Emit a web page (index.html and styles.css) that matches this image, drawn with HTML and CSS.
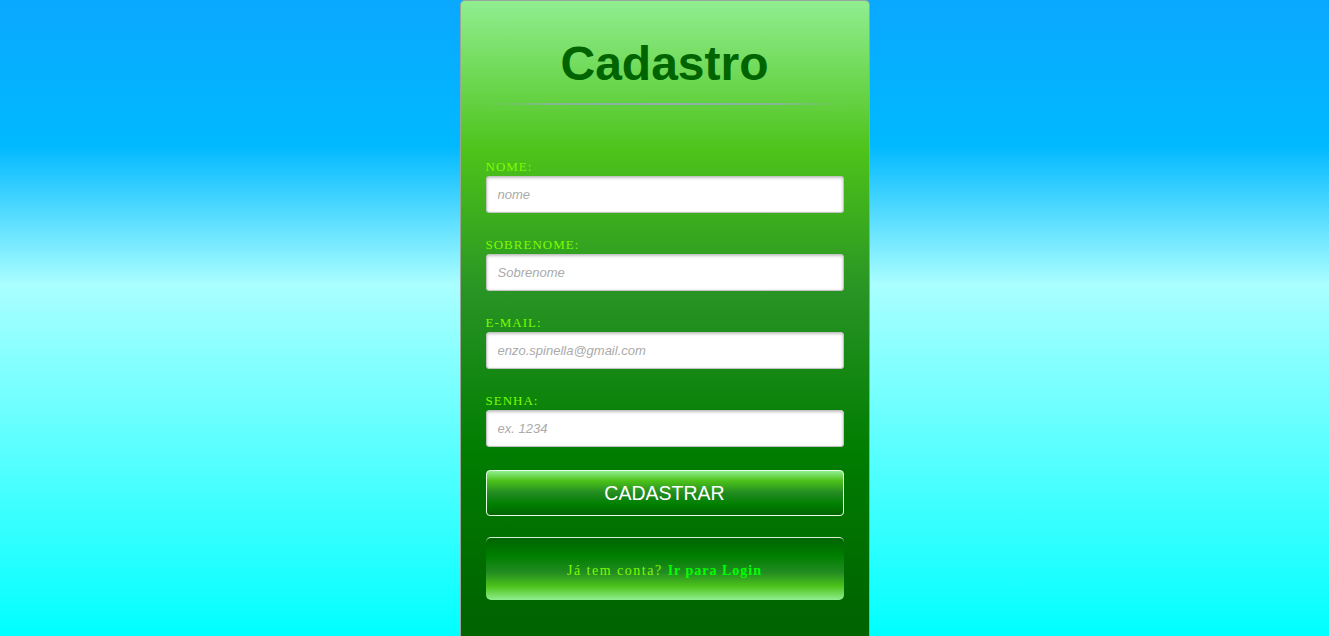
FILE: index.html
```html
<!DOCTYPE html>
<html lang="pt-BR">
<head>
<meta charset="utf-8">
<title>Cadastro</title>
<link rel="stylesheet" href="styles.css">
</head>
<body>
<main class="card">
  <h1 class="title">Cadastro</h1>
  <div class="divider"></div>
  <form class="form">
    <div class="field">
      <label class="label" for="nome">NOME:</label>
      <input class="input" id="nome" type="text" placeholder="nome">
    </div>
    <div class="field">
      <label class="label" for="sobrenome">SOBRENOME:</label>
      <input class="input" id="sobrenome" type="text" placeholder="Sobrenome">
    </div>
    <div class="field">
      <label class="label" for="email">E-MAIL:</label>
      <input class="input" id="email" type="email" placeholder="enzo.spinella@gmail.com">
    </div>
    <div class="field">
      <label class="label" for="senha">SENHA:</label>
      <input class="input" id="senha" type="password" placeholder="ex. 1234">
    </div>
    <button class="submit" type="button">CADASTRAR</button>
    <div class="login-box">
      <p class="login-text">Já tem conta? <a class="login-link" href="#">Ir para Login</a></p>
    </div>
  </form>
</main>
</body>
</html>
```

FILE: styles.css
```css
html, body {
  margin: 0;
  padding: 0;
  height: 100%;
  overflow: hidden;
}

html {
  background: linear-gradient(to bottom, #0aa8ff 0px, #00b9ff 145px, #aaffff 285px, #00ffff 636px);
}

body {
  font-family: "Liberation Sans", Arial, sans-serif;
}

.card {
  box-sizing: border-box;
  width: 410px;
  height: 100%;
  margin: 0 auto;
  padding: 35px 25px 0;
  border: 1px solid #9aa59a;
  border-bottom: 0;
  border-radius: 5px 5px 0 0;
  background: linear-gradient(to bottom, #90ee90 0px, #4dc31a 150px, #279324 295px, #017d01 450px, #006400 620px);
}

.title {
  margin: 0;
  font-family: "Liberation Sans", Arial, sans-serif;
  font-size: 48px;
  line-height: 56px;
  font-weight: bold;
  color: #006400;
  text-align: center;
}

.divider {
  height: 2px;
  margin-top: 11px;
  background: linear-gradient(to right, rgba(150,170,190,0) 0%, rgba(150,170,190,0.7) 20%, rgba(150,170,190,0.9) 50%, rgba(150,170,190,0.7) 80%, rgba(150,170,190,0) 100%);
}

.form {
  display: flex;
  flex-direction: column;
  margin-top: 54px;
}

.field {
  display: flex;
  flex-direction: column;
  gap: 2px;
  margin-bottom: 24px;
}

.label {
  font-family: "Liberation Serif", "Times New Roman", serif;
  font-size: 13px;
  line-height: 15px;
  letter-spacing: 1px;
  color: #7cfc00;
}

.input {
  box-sizing: border-box;
  width: 358px;
  height: 37px;
  margin: 0;
  padding: 0 11px;
  border: 1px solid #c4c4c4;
  border-radius: 3px;
  background: #fff;
  box-shadow: inset 0 1px 3px rgba(0,0,0,0.25);
  font-family: "Liberation Sans", Arial, sans-serif;
  font-size: 13px;
  font-style: italic;
  color: #333;
  outline: none;
}

.input::placeholder {
  color: #aaaaaa;
  font-style: italic;
}

.submit {
  box-sizing: border-box;
  width: 358px;
  height: 46px;
  margin: -1px 0 0;
  padding: 0;
  border: 1px solid #e8ffe8;
  border-radius: 4px;
  background: linear-gradient(to bottom, #90ee90 0%, #4dc31a 22%, #228b22 50%, #008000 75%, #006400 100%);
  font-family: "Liberation Sans", Arial, sans-serif;
  font-size: 19.5px;
  color: #fff;
  cursor: pointer;
}

.login-box {
  box-sizing: border-box;
  width: 358px;
  height: 63px;
  margin-top: 21px;
  border-top: 1px solid #d8f0d8;
  border-radius: 5px;
  background: linear-gradient(to bottom, #006400 0%, #008000 30%, #228b22 55%, #4dc31a 78%, #90ee90 100%);
  display: flex;
  align-items: center;
  justify-content: center;
}

.login-text {
  margin: 4px 0 0;
  font-family: "Liberation Serif", "Times New Roman", serif;
  font-size: 14px;
  letter-spacing: 1.5px;
  color: #7cfc00;
}

.login-link {
  font-weight: bold;
  letter-spacing: 1px;
  color: #00ff00;
  text-decoration: none;
}
```
